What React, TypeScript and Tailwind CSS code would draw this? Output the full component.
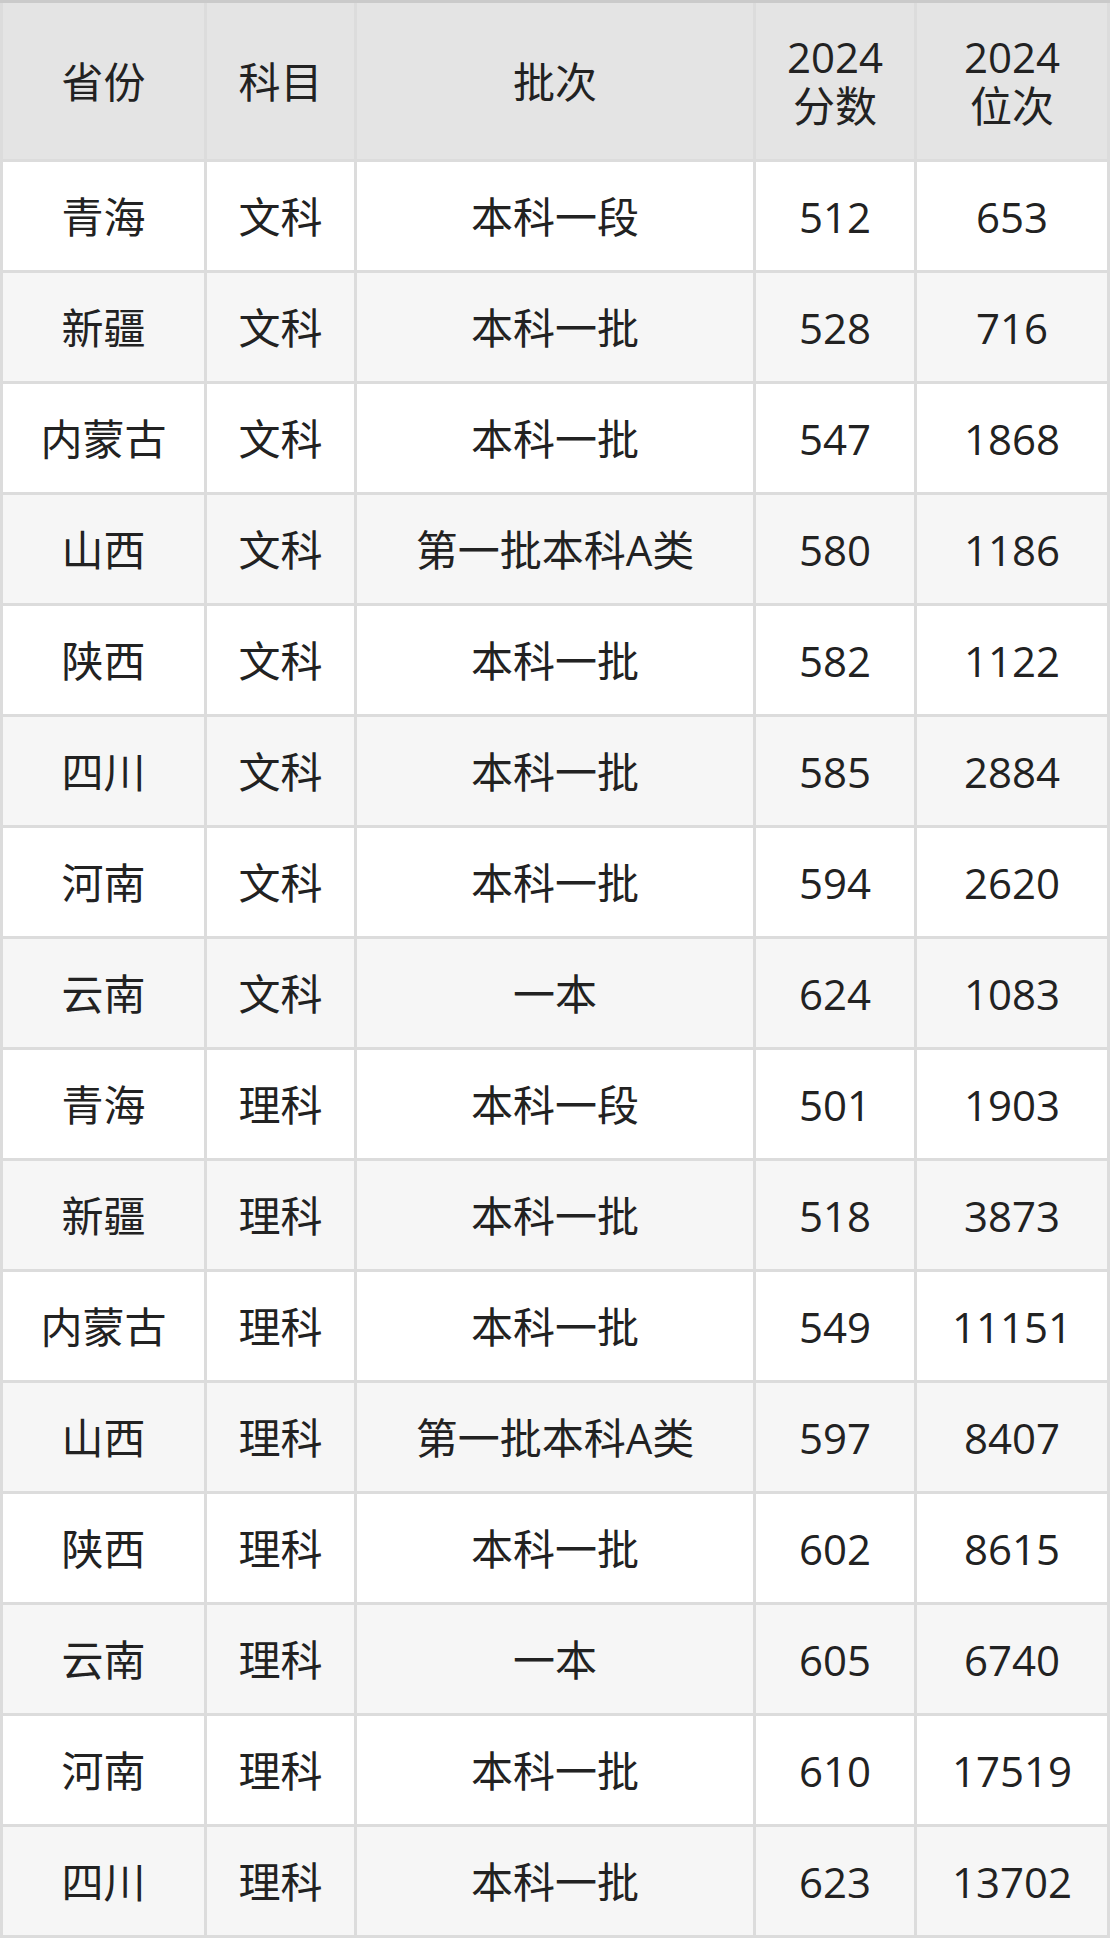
const rows: [string, string, string, string, string][] = [
  ["青海", "文科", "本科一段", "512", "653"],
  ["新疆", "文科", "本科一批", "528", "716"],
  ["内蒙古", "文科", "本科一批", "547", "1868"],
  ["山西", "文科", "第一批本科A类", "580", "1186"],
  ["陕西", "文科", "本科一批", "582", "1122"],
  ["四川", "文科", "本科一批", "585", "2884"],
  ["河南", "文科", "本科一批", "594", "2620"],
  ["云南", "文科", "一本", "624", "1083"],
  ["青海", "理科", "本科一段", "501", "1903"],
  ["新疆", "理科", "本科一批", "518", "3873"],
  ["内蒙古", "理科", "本科一批", "549", "11151"],
  ["山西", "理科", "第一批本科A类", "597", "8407"],
  ["陕西", "理科", "本科一批", "602", "8615"],
  ["云南", "理科", "一本", "605", "6740"],
  ["河南", "理科", "本科一批", "610", "17519"],
  ["四川", "理科", "本科一批", "623", "13702"],
];

const headers = [["省份"], ["科目"], ["批次"], ["2024", "分数"], ["2024", "位次"]];

export default function App() {
  return (
    <div
      className="w-[1110px] bg-[#dcdcdc] border-t-[3px] border-t-[#cacaca] px-[3px] pb-[3px] text-[#222222] text-[42px]"
      style={{ fontFamily: '"Open Sans", "Noto Sans CJK SC", sans-serif' }}
    >
      <div className="grid grid-cols-[201px_147px_396px_158px_190px] gap-[3px]">
        {headers.map((h, i) => (
          <div
            key={i}
            className="h-[156px] bg-[#e4e4e4] flex flex-col items-center justify-center leading-[49px]"
          >
            {h.map((line) => (
              <span key={line}>{line}</span>
            ))}
          </div>
        ))}
      </div>
      {rows.map((row, r) => (
        <div
          key={r}
          className="grid grid-cols-[201px_147px_396px_158px_190px] gap-[3px] mt-[3px]"
        >
          {row.map((cell, c) => (
            <div
              key={c}
              className={
                "h-[108px] flex items-center justify-center whitespace-nowrap " +
                (r % 2 === 0 ? "bg-white" : "bg-[#f6f6f6]")
              }
            >
              {cell}
            </div>
          ))}
        </div>
      ))}
    </div>
  );
}
